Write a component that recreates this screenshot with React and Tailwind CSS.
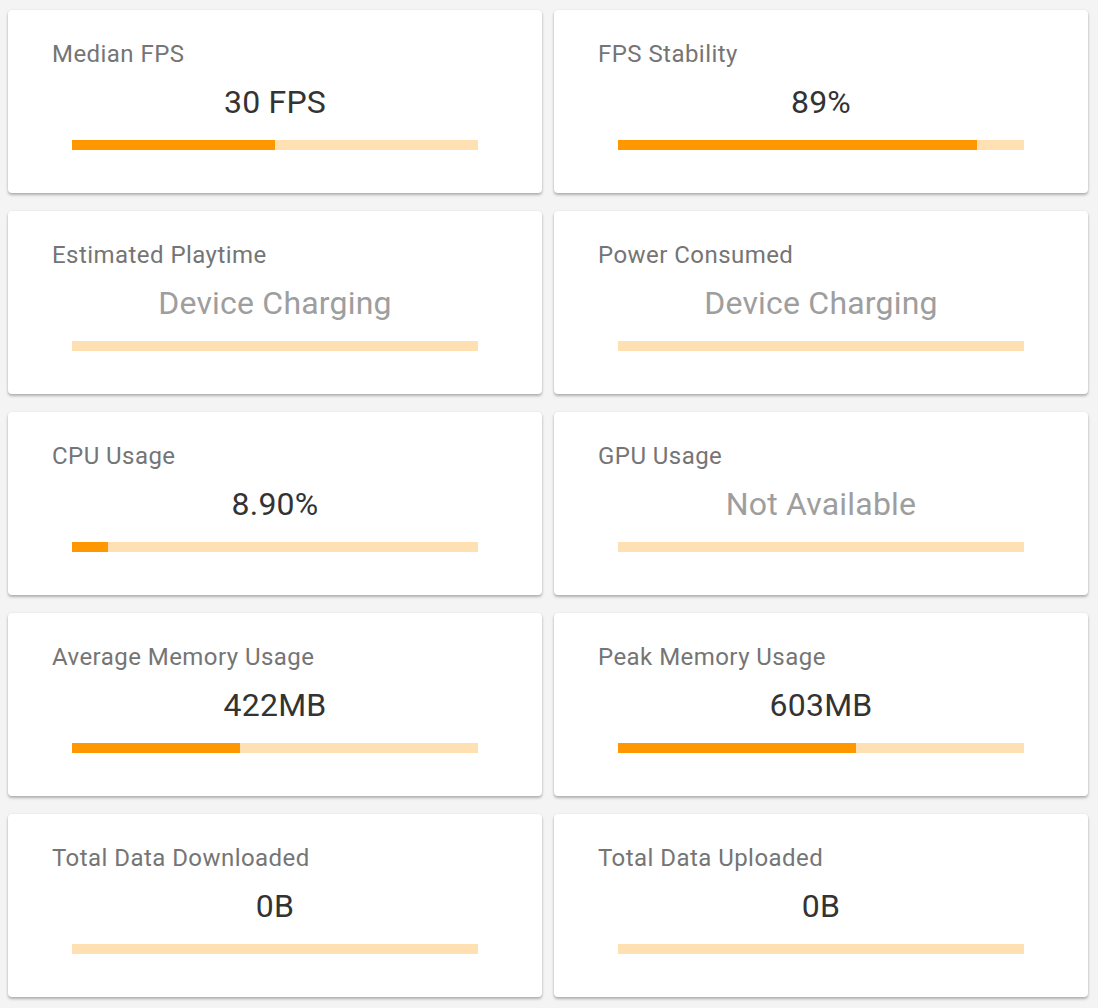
const cards = [
  { title: "Median FPS", value: "30 FPS", pct: 50 },
  { title: "FPS Stability", value: "89%", pct: 88.5 },
  { title: "Estimated Playtime", value: "Device Charging", pct: null },
  { title: "Power Consumed", value: "Device Charging", pct: null },
  { title: "CPU Usage", value: "8.90%", pct: 8.9 },
  { title: "GPU Usage", value: "Not Available", pct: null },
  { title: "Average Memory Usage", value: "422MB", pct: 41.3 },
  { title: "Peak Memory Usage", value: "603MB", pct: 58.6 },
  { title: "Total Data Downloaded", value: "0B", pct: 0 },
  { title: "Total Data Uploaded", value: "0B", pct: 0 },
];

function Card({ title, value, pct }) {
  const muted = pct === null;
  return (
    <div className="h-[183px] rounded-[4px] bg-white shadow-[0_2px_3px_rgba(0,0,0,0.28),0_0_2px_rgba(0,0,0,0.08)] pt-[30px] flex flex-col">
      <div className="pl-[44px] text-[24px] leading-[28px] tracking-[0.45px] text-[#757575]">{title}</div>
      <div
        className={
          "mt-[15px] text-center text-[32px] leading-[38px] tracking-[0.2px] " +
          (muted ? "text-[#9e9e9e]" : "text-[#333333]")
        }
      >
        {value}
      </div>
      <div className="mt-[19px] mx-[64px] h-[10px] bg-[#ffe0b2] flex">
        {pct ? <div className="h-full bg-[#ff9800]" style={{ width: pct + "%" }} /> : null}
      </div>
    </div>
  );
}

export default function App() {
  return (
    <div
      className="min-h-[1008px] bg-[#f4f4f4] pl-[8px] pr-[10px] pt-[10px] pb-[11px]"
      style={{ fontFamily: "Roboto, 'Liberation Sans', sans-serif" }}
    >
      <div className="grid grid-cols-2 gap-x-[12px] gap-y-[18px]">
        {cards.map((c) => (
          <Card key={c.title} {...c} />
        ))}
      </div>
    </div>
  );
}
